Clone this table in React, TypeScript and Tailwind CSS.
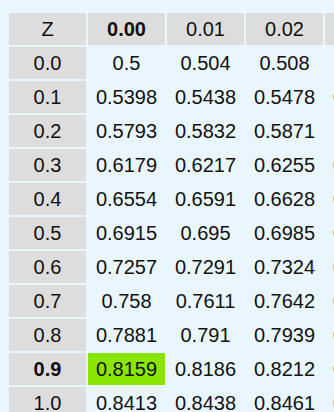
import React from "react";

const cols = ["0.00", "0.01", "0.02", "0.03", "0.04"];
const rows: [string, string[]][] = [
  ["0.0", ["0.5", "0.504", "0.508", "0.512", "0.516"]],
  ["0.1", ["0.5398", "0.5438", "0.5478", "0.5517", "0.5557"]],
  ["0.2", ["0.5793", "0.5832", "0.5871", "0.591", "0.5948"]],
  ["0.3", ["0.6179", "0.6217", "0.6255", "0.6293", "0.6331"]],
  ["0.4", ["0.6554", "0.6591", "0.6628", "0.6664", "0.67"]],
  ["0.5", ["0.6915", "0.695", "0.6985", "0.7019", "0.7054"]],
  ["0.6", ["0.7257", "0.7291", "0.7324", "0.7357", "0.7389"]],
  ["0.7", ["0.758", "0.7611", "0.7642", "0.7673", "0.7704"]],
  ["0.8", ["0.7881", "0.791", "0.7939", "0.7967", "0.7995"]],
  ["0.9", ["0.8159", "0.8186", "0.8212", "0.8238", "0.8264"]],
  ["1.0", ["0.8413", "0.8438", "0.8461", "0.8485", "0.8508"]],
];

export default function App() {
  return (
    <div
      className="w-[334px] h-[412px] overflow-hidden bg-[#eaf6fd] text-[20px] text-[#111]"
      style={{ fontFamily: '"Liberation Sans", Arial, sans-serif' }}
    >
      <div className="pt-[13px] pl-[9px] grid grid-cols-[repeat(6,77px)] auto-rows-[32px] gap-[2px] w-max">
        <div className="bg-[#dddddd] flex items-center justify-center">Z</div>
        {cols.map((c, i) => (
          <div
            key={c}
            className={
              "bg-[#dddddd] flex items-center justify-center" +
              (i === 0 ? " font-bold" : "")
            }
          >
            {c}
          </div>
        ))}
        {rows.map(([z, vals]) => (
          <React.Fragment key={z}>
            <div
              className={
                "bg-[#dddddd] flex items-center justify-center" +
                (z === "0.9" ? " font-bold" : "")
              }
            >
              {z}
            </div>
            {vals.map((v, i) => (
              <div
                key={i}
                className={
                  "flex items-center justify-center" +
                  (z === "0.9" && i === 0 ? " bg-[#8ae600]" : "")
                }
              >
                {v}
              </div>
            ))}
          </React.Fragment>
        ))}
      </div>
    </div>
  );
}
